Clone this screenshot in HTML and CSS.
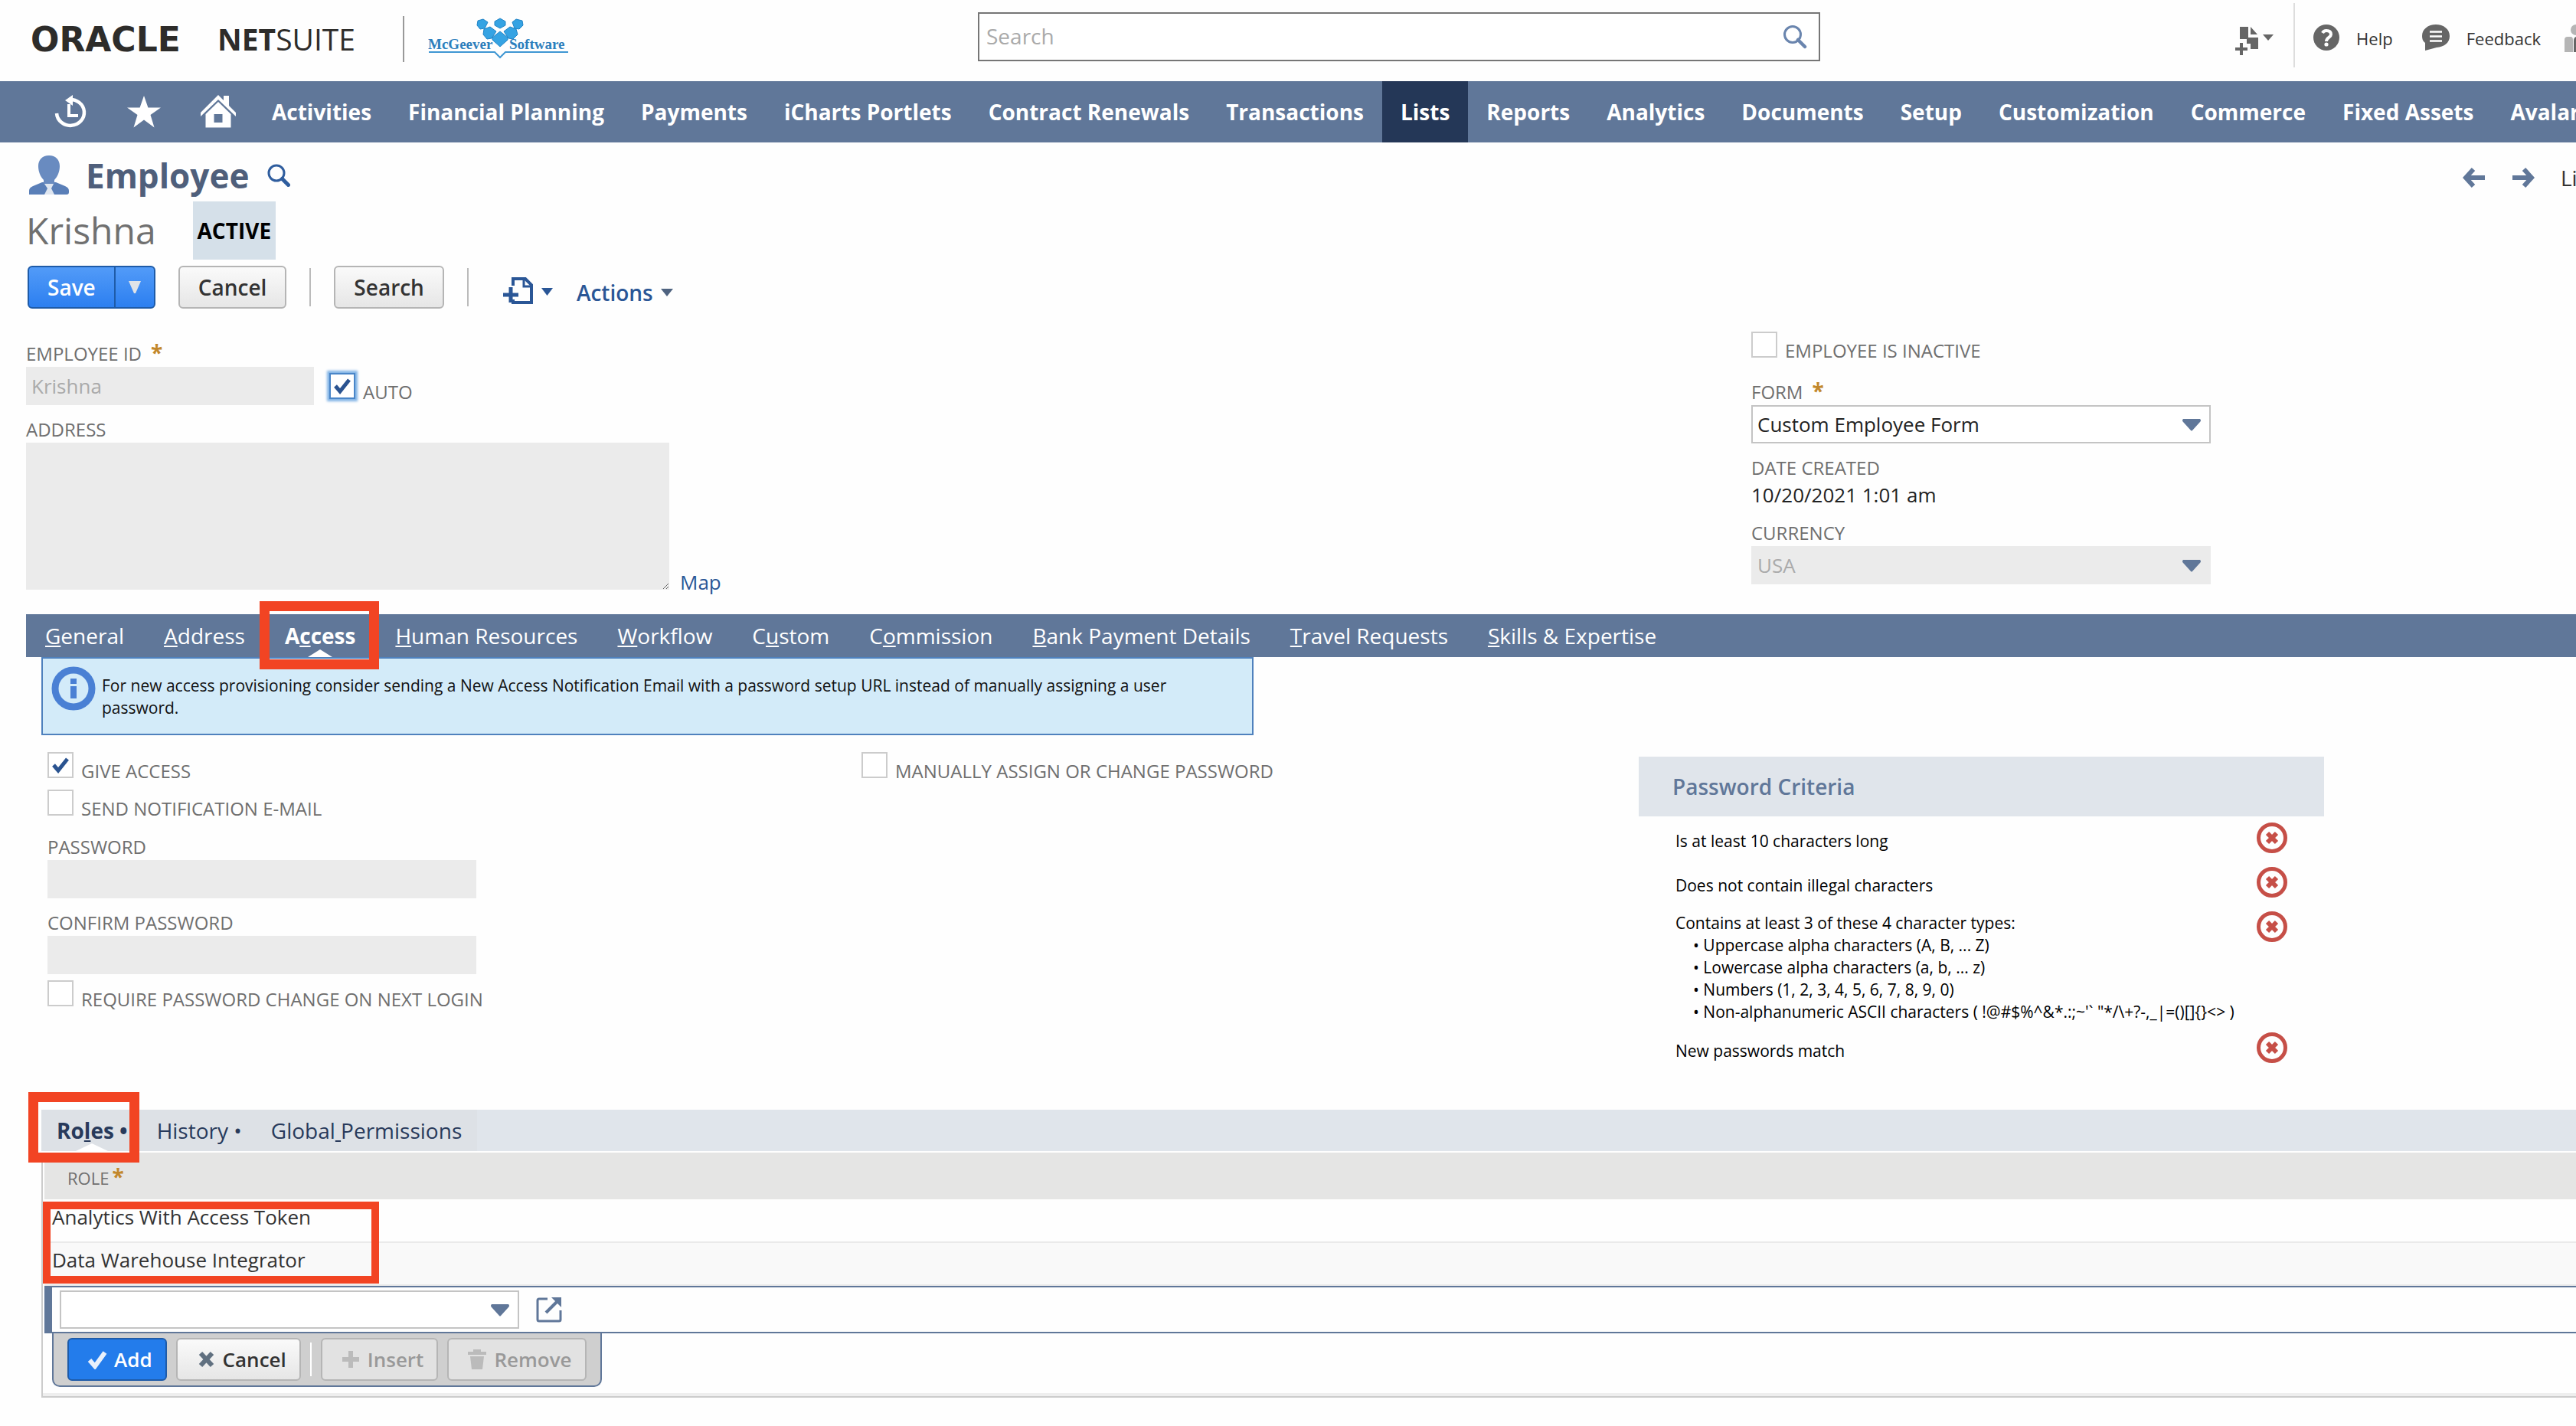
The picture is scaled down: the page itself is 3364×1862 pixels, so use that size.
FILE: index.html
```html
<!DOCTYPE html>
<html lang="en">
<head>
  <meta charset="UTF-8" />
  <meta name="viewport" content="width=device-width, initial-scale=1.0"/>
  <title>Employee - NetSuite</title>
  <link rel="stylesheet" href="styles.css">
</head>
<body>

  <!-- Header -->
  <header class="header">
    <div class="brand">
      <span class="oracle">ORACLE</span>
      <span class="netsuite"><b>NET</b>SUITE</span>
      <svg class="partner-logo" width="186" height="56" viewBox="0 0 186 56" role="img" aria-label="McGeever Software">
        <g fill="#35a3e3" stroke="#1f83c6" stroke-width="1">
          <path d="M65 4l7-2 6 4-4 8-6 1-4-5z"/>
          <path d="M87 5l7-4 7 4v5l-7 4-7-4z"/>
          <path d="M110 6l5-4 8 2 1 6-5 5-6-1z"/>
          <path d="M73 15l8-3 8 6-6 9-6 1-5-6z"/>
          <path d="M99 18l8-6 8 3 2 7-6 6-6-1z"/>
          <path d="M84 26l10-8 10 8v3L94 38l-10-9z"/>
        </g>
        <g fill="#2c7fbd" font-size="19">
          <text x="0" y="41">McGeever</text>
          <text x="106" y="41">Software</text>
        </g>
        <path d="M1 45h86l7 7 7-7h82" fill="none" stroke="#3f97d3" stroke-width="2"/>
      </svg>
    </div>

    <div class="global-search">
      <input type="search" placeholder="Search" aria-label="Global search" />
      <svg width="32" height="32" viewBox="0 0 32 32" fill="none" stroke="#6a85ae"><circle cx="13" cy="13" r="10.5" stroke-width="3"/><path d="M20 20l9 9" stroke-width="4.5" stroke-linecap="round"/></svg>
    </div>

    <div class="tools">
      <button class="icon-btn" aria-label="Create new">
        <svg width="50" height="38" viewBox="0 0 50 38" fill="#666"><path d="M6 1h11v14h5v0h8v15H20v-7h-5v-6H6zM20 1l9 10h-9z"/><path d="M6 22h4v6h6v4h-6v6H6v-6H0v-4h6z"/><path d="M36 11h14l-7 8z"/></svg>
      </button>
      <div class="tools-links">
        <a href="#"><svg width="34" height="34" viewBox="0 0 34 34"><circle cx="17" cy="17" r="17" fill="#666"/><path d="M12 11c1-2 3-3 5-3 4 0 6 2 6 5 0 4-6 4-6 9" fill="none" stroke="#fff" stroke-width="4"/><circle cx="17" cy="26" r="2.600" fill="#fff"/></svg>Help</a>
        <a href="#"><svg width="36" height="34" viewBox="0 0 36 34"><path d="M18 0c10 0 18 6 18 15S29 29 19 30L4 34V24C1 22 0 19 0 15 0 6 8 0 18 0z" fill="#666"/><path d="M10 9.500h16M10 15.500h16M10 21.500h16" stroke="#fff" stroke-width="2.500"/></svg>Feedback</a>
        <svg class="role-icon" width="15" height="36" viewBox="0 0 15 36"><path d="M0 36V20q0-4 4-4h4q3 0 3 4v16z" fill="#b5b5b5"/><circle cx="15" cy="7" r="7" fill="#b5b5b5"/><path d="M12 36V21q0-4 3-5v20z" fill="#666"/></svg>
      </div>
    </div>
  </header>

  <!-- Main nav -->
  <nav class="main-nav">
    <a href="#" class="nav-icon" aria-label="Recent"><svg width="44" height="44" viewBox="0 0 44 44" fill="none" stroke="#fff"><path d="M3 24a18 17 0 1 0 16-18" stroke-width="4.500"/><path d="M24 0l-10 7 10 7z" fill="#fff" stroke="none"/><path d="M19 12v15h12" stroke-width="4"/></svg></a>
    <a href="#" class="nav-icon" aria-label="Shortcuts"><svg width="44" height="44" viewBox="0 0 44 44" fill="#fff"><path d="M22 1l5.400 15.500H44L30.500 26l5 16.500L22 32.500 8.500 42.500l5-16.500L0 16.500h16.600z"/></svg></a>
    <a href="#" class="nav-icon nav-home" aria-label="Home"><svg width="48" height="44" viewBox="0 0 48 44"><path d="M24 0l7 7V1h7v13l9 9v5L24 6 1 28v-5z" fill="#fff"/><path fill-rule="evenodd" d="M24 9l16.500 16v17.500h-33V25zM18.500 25v11h11V25z" fill="#fff"/></svg></a>
    <a href="#">Activities</a>
    <a href="#">Financial Planning</a>
    <a href="#">Payments</a>
    <a href="#">iCharts Portlets</a>
    <a href="#">Contract Renewals</a>
    <a href="#">Transactions</a>
    <a href="#" class="active">Lists</a>
    <a href="#">Reports</a>
    <a href="#">Analytics</a>
    <a href="#">Documents</a>
    <a href="#">Setup</a>
    <a href="#">Customization</a>
    <a href="#">Commerce</a>
    <a href="#">Fixed Assets</a>
    <a href="#">Avalara</a>
  </nav>

  <main>
    <!-- Record title -->
    <div class="title-row">
      <svg width="54" height="54" viewBox="0 0 54 54"><path d="M1 52v-5q0-4 5-6l12-5h18l12 5q5 2 5 6v2q0 3-3 3z" fill="#5a7fb8"/><path d="M27 1c9 0 14 6 14 14 0 7-3 14-7 18v5q-7 3-14 0v-5c-4-4-7-11-7-18C13 7 18 1 27 1z" fill="#698bc0"/><path d="M21 38h12l-3 6 4 8H21l4-8z" fill="#dfe6f0"/></svg>
      <h1>Employee</h1>
      <a href="#" aria-label="Find"><svg width="30" height="30" viewBox="0 0 30 30" fill="none" stroke="#2f5d9e"><circle cx="12" cy="12" r="10" stroke-width="3"/><path d="M19.500 19.500l8 8" stroke-width="5" stroke-linecap="round"/></svg></a>
      <div class="pager">
        <a href="#" aria-label="Previous"><svg width="30" height="26" viewBox="0 0 30 26" fill="none" stroke="#607799" stroke-width="6"><path d="M14 2L4 13l10 11M5 13h24"/></svg></a>
        <a href="#" aria-label="Next"><svg width="30" height="26" viewBox="0 0 30 26" fill="none" stroke="#607799" stroke-width="6"><path d="M16 2l10 11-10 11M25 13H1"/></svg></a>
        <a href="#" class="pager-text">List</a>
      </div>
    </div>
    <div class="name-row">
      <span class="record-name">Krishna</span>
      <span class="status">ACTIVE</span>
    </div>

    <div class="toolbar">
      <div class="split-btn">
        <button class="btn btn-primary">Save</button>
        <button class="btn btn-primary" aria-label="More save options"><svg width="16" height="16" viewBox="0 0 16 16"><path d="M0 0h16L9 16H7z" fill="#dfe3e8"/></svg></button>
      </div>
      <button class="btn">Cancel</button>
      <span class="divider"></span>
      <button class="btn">Search</button>
      <span class="divider"></span>
      <a href="#" class="menu-link menu-new" aria-label="New"><svg width="66" height="38" viewBox="0 0 66 38" fill="none" stroke="#2a5696"><path d="M13 12V3h16l8 8v23H13v-4" stroke-width="4"/><path d="M27 3v10h10" stroke-width="3"/><path d="M0 24h20M10 14v20" stroke-width="5"/><path d="M50 15h15l-7.500 10z" fill="#2a5696" stroke="none"/></svg></a>
      <a href="#" class="menu-link">Actions<svg width="16" height="10" viewBox="0 0 16 10"><path d="M0 0h16L8 10z" fill="#4f6380"/></svg></a>
    </div>

    <!-- Main fields -->
    <form class="fields">
      <div class="fields-left">
        <label class="field-label" for="empId">EMPLOYEE ID<span class="required">*</span></label>
        <div class="field-line">
          <input type="text" id="empId" class="input emp-id" value="Krishna" disabled />
          <div class="check focused">
            <span class="box"><input type="checkbox" id="auto" checked /><svg viewBox="0 0 24 22"><path d="M3 11l6 7L21 3" /></svg></span>
            <label for="auto">AUTO</label>
          </div>
        </div>
        <label class="field-label spaced" for="address">ADDRESS</label>
        <div class="address-line">
          <textarea id="address" class="input" disabled></textarea>
          <a href="#" class="map-link">Map</a>
        </div>
      </div>

      <div class="fields-right">
        <div class="check">
          <span class="box"><input type="checkbox" id="inactive" /></span>
          <label for="inactive">EMPLOYEE IS INACTIVE</label>
        </div>
        <label class="field-label after-check" for="form">FORM<span class="required">*</span></label>
        <div class="select">
          <select id="form"><option>Custom Employee Form</option></select>
          <svg viewBox="0 0 24 16"><path d="M1 0h22q2 2 0 4L13 15q-1 1-2 0L1 4Q-1 2 1 0z"/></svg>
        </div>
        <div class="field-label spaced">DATE CREATED</div>
        <div class="value">10/20/2021 1:01 am</div>
        <label class="field-label spaced" for="currency">CURRENCY</label>
        <div class="select">
          <select id="currency" disabled><option>USA</option></select>
          <svg viewBox="0 0 24 16"><path d="M1 0h22q2 2 0 4L13 15q-1 1-2 0L1 4Q-1 2 1 0z"/></svg>
        </div>
      </div>
    </form>

    <!-- Tabs -->
    <nav class="tabs">
      <a href="#"><u>G</u>eneral</a>
      <a href="#"><u>A</u>ddress</a>
      <a href="#" class="current">A<u>c</u>cess</a>
      <a href="#"><u>H</u>uman Resources</a>
      <a href="#"><u>W</u>orkflow</a>
      <a href="#">C<u>u</u>stom</a>
      <a href="#">C<u>o</u>mmission</a>
      <a href="#"><u>B</u>ank Payment Details</a>
      <a href="#"><u>T</u>ravel Requests</a>
      <a href="#"><u>S</u>kills &amp; Expertise</a>
    </nav>

    <section class="tab-body">
      <div class="info-box">
        <svg width="58" height="58" viewBox="0 0 58 58"><circle cx="29" cy="29" r="24" fill="none" stroke="#4a80d4" stroke-width="9"/><path d="M25 16h8v7h-8zM25 26h8v16h-8z" fill="#4a80d4"/></svg>
        <p>For new access provisioning consider sending a New Access Notification Email with a password setup URL instead of manually assigning a user password.</p>
      </div>

      <div class="access">
        <div class="access-login">
          <div class="check">
            <span class="box"><input type="checkbox" id="giveAccess" checked /><svg viewBox="0 0 24 22"><path d="M3 11l6 7L21 3" /></svg></span>
            <label for="giveAccess">GIVE ACCESS</label>
          </div>
          <div class="check">
            <span class="box"><input type="checkbox" id="notify" /></span>
            <label for="notify">SEND NOTIFICATION E-MAIL</label>
          </div>
          <label class="field-label spaced" for="password">PASSWORD</label>
          <input type="password" id="password" class="input pwd" disabled />
          <label class="field-label spaced" for="password2">CONFIRM PASSWORD</label>
          <input type="password" id="password2" class="input pwd" disabled />
          <div class="check">
            <span class="box"><input type="checkbox" id="requireChange" /></span>
            <label for="requireChange">REQUIRE PASSWORD CHANGE ON NEXT LOGIN</label>
          </div>
        </div>

        <div class="access-manual">
          <div class="check">
            <span class="box"><input type="checkbox" id="manual" /></span>
            <label for="manual">MANUALLY ASSIGN OR CHANGE PASSWORD</label>
          </div>
        </div>

        <div class="criteria">
          <h2>Password Criteria</h2>
          <ul>
            <li>
              <div>Is at least 10 characters long</div>
              <svg viewBox="0 0 40 40"><circle cx="20" cy="20" r="17.500"/><path d="M14 14l12 12M26 14L14 26"/></svg>
            </li>
            <li>
              <div>Does not contain illegal characters</div>
              <svg viewBox="0 0 40 40"><circle cx="20" cy="20" r="17.500"/><path d="M14 14l12 12M26 14L14 26"/></svg>
            </li>
            <li>
              <div class="types">Contains at least 3 of these 4 character types:
                <p>• Uppercase alpha characters (A, B, ... Z)</p>
                <p>• Lowercase alpha characters (a, b, ... z)</p>
                <p>• Numbers (1, 2, 3, 4, 5, 6, 7, 8, 9, 0)</p>
                <p>• Non-alphanumeric ASCII characters ( !@#$%^&amp;*.:;~'` "*/\+?-,_|=()[]{}&lt;&gt; )</p>
              </div>
              <svg viewBox="0 0 40 40"><circle cx="20" cy="20" r="17.500"/><path d="M14 14l12 12M26 14L14 26"/></svg>
            </li>
            <li>
              <div>New passwords match</div>
              <svg viewBox="0 0 40 40"><circle cx="20" cy="20" r="17.500"/><path d="M14 14l12 12M26 14L14 26"/></svg>
            </li>
          </ul>
        </div>
      </div>

      <!-- Roles sublist -->
      <nav class="subtabs">
        <div class="subtabs-list">
          <a href="#" class="current">Ro<u>l</u>es •</a>
          <a href="#">History •</a>
          <a href="#">Global<u> </u>Permissions</a>
        </div>
      </nav>
      <div class="sublist">
        <div class="roles">
          <table>
            <thead>
              <tr><th>ROLE<span class="required">*</span></th></tr>
            </thead>
            <tbody>
              <tr><td>Analytics With Access Token</td></tr>
              <tr><td>Data Warehouse Integrator</td></tr>
            </tbody>
          </table>
          <div class="highlight"></div>
        </div>
        <div class="edit-row">
          <div class="select">
            <select aria-label="Role"><option></option></select>
            <svg viewBox="0 0 24 16"><path d="M1 0h22q2 2 0 4L13 15q-1 1-2 0L1 4Q-1 2 1 0z"/></svg>
          </div>
          <a href="#" aria-label="Open"><svg width="34" height="34" viewBox="0 0 34 34" fill="none" stroke="#607799" stroke-width="3"><path d="M15 3H4q-2 0-2 2v25q0 2 2 2h26q2 0 2-2V18"/><path d="M13 21L28 6" stroke-width="4"/><path d="M20 1h13v13z" fill="#607799" stroke="none"/></svg></a>
        </div>
        <div class="row-actions">
          <button class="btn btn-add"><svg viewBox="0 0 26 26"><path d="M3 14l7 8L23 4" fill="none" stroke="#e8f0fb" stroke-width="6"/></svg>Add</button>
          <button class="btn"><svg viewBox="0 0 26 26"><path d="M6 5l15 16M21 5L6 21" fill="none" stroke="#607080" stroke-width="6"/></svg>Cancel</button>
          <span class="divider"></span>
          <button class="btn" disabled><svg viewBox="0 0 26 26"><path d="M13 2v22M2 13h22" fill="none" stroke="#bbb" stroke-width="6"/></svg>Insert</button>
          <button class="btn" disabled><svg viewBox="0 0 26 26"><path d="M1 3h7V0h10v3h7v4H1zM4 9h18l-2 17H6z" fill="#bbb"/></svg>Remove</button>
        </div>
      </div>
    </section>
  </main>

</body>
</html>
```
FILE: styles.css
```css
* {
  margin: 0;
  padding: 0;
  box-sizing: border-box;
  font-family: "Open Sans", sans-serif;
}

body {
  background-color: #fefefe;
  color: #222;
  font-size: 26px;
  overflow-x: hidden;
}

a {
  color: inherit;
  text-decoration: none;
}

svg {
  display: block;
  flex-shrink: 0;
}

/* header */
.header {
  display: grid;
  grid-template-columns: 1277fr 1100fr 987fr;
  height: 106px;
}

.brand {
  display: flex;
  align-items: center;
  padding: 0 0 4px 40px;
  color: #2d2c2a;
}

.oracle {
  width: 244px;
  font-family: "DejaVu Sans", sans-serif;
  font-size: 44px;
  font-weight: bold;
}

.netsuite {
  font-size: 39px;
  padding-right: 62px;
  line-height: 60px;
  border-right: 2px solid #999;
}

.partner-logo {
  margin-left: 31px;
}

.partner-logo text {
  font-family: "Liberation Serif", serif;
  font-weight: bold;
}

.global-search {
  position: relative;
  padding-top: 16px;
}

.global-search input {
  width: 100%;
  height: 64px;
  padding: 0 60px 2px 9px;
  border: 2px solid #767676;
  background-color: #fff;
  font-size: 28px;
  appearance: none;
}

.global-search input::placeholder {
  color: #aaa;
}

.global-search svg {
  position: absolute;
  right: 17px;
  top: 32px;
}

.tools {
  display: flex;
  justify-content: flex-end;
  padding-top: 4px;
}

.icon-btn {
  height: 92px;
  padding: 6px 26px 0 0;
  border: none;
  background: none;
}

.tools-links {
  display: flex;
  height: 84px;
  padding-left: 24px;
  border-left: 2px solid #ddd;
  color: #333;
  font-size: 22px;
}

.tools-links a {
  display: flex;
  align-items: center;
  gap: 22px;
  margin-right: 38px;
  padding-top: 8px;
}

.tools-links a svg {
  margin-bottom: 2px;
}

.tools-links a:nth-child(2) {
  margin-right: 31px;
}

.role-icon {
  margin-top: 28px;
}

/* main nav */
.main-nav {
  display: flex;
  height: 80px;
  padding-left: 71px;
  background-color: #607799;
  color: #fff;
  font-size: 28px;
  font-weight: bold;
  line-height: 80px;
  white-space: nowrap;
  overflow: hidden;
}

.main-nav a {
  padding: 0 24px;
}

.main-nav .nav-icon {
  padding: 18px 51px 0 0;
}

.main-nav .nav-home {
  padding-right: 22px;
}

.main-nav .active {
  background-color: #243757;
}

/* record title */
.title-row {
  display: flex;
  align-items: center;
  padding: 17px 0 0 37px;
  height: 69px;
}

h1 {
  margin: 0 24px 0 21px;
  font-size: 44px;
  line-height: 52px;
  color: #4f5f7b;
}

.pager {
  display: flex;
  align-items: center;
  gap: 34px;
  width: 148px;
  margin-left: auto;
  padding-top: 6px;
  overflow: hidden;
}

.pager-text {
  font-size: 28px;
  color: #333;
}

.name-row {
  display: flex;
  margin: 8px 0;
  padding-left: 34px;
  line-height: 76px;
}

.record-name {
  margin-right: 48px;
  font-size: 48px;
  color: #707070;
}

.status {
  padding: 0 6px;
  background-color: #d5e0e9;
  color: #000;
  font-size: 28px;
  font-weight: bold;
}

.toolbar {
  display: flex;
  align-items: center;
  gap: 30px;
  padding-left: 36px;
}

.btn {
  height: 56px;
  padding: 0 24px;
  border: 2px solid #b5b5b5;
  border-radius: 6px;
  background: linear-gradient(#fafafa, #e6e6e6);
  color: #333;
  font-size: 28px;
  font-weight: 600;
}

.split-btn {
  display: flex;
}

.btn-primary {
  background: linear-gradient(#529bf8, #2c7ff0);
  border-color: #1e5ba8;
  color: #fff;
}

.split-btn .btn:first-child {
  border-radius: 6px 0 0 6px;
}

.split-btn .btn:last-child {
  margin-left: -2px;
  padding: 0 17px;
  border-radius: 0 6px 6px 0;
}

.divider {
  width: 2px;
  height: 50px;
  background-color: #bbb;
}

.menu-link {
  display: flex;
  align-items: center;
  gap: 10px;
  margin-top: 14px;
  color: #2a5696;
  font-size: 28px;
  font-weight: 600;
}

.menu-new {
  margin: 10px 0 0 15px;
}

/* main fields */
.fields {
  display: grid;
  grid-template-columns: 2253fr 1077fr;
  padding: 30px 0 32px 34px;
}

.fields-left {
  padding-top: 13px;
}

.field-label {
  display: block;
  margin-bottom: 1px;
  font-size: 24px;
  line-height: 32px;
  color: #6f6f6f;
}

.field-label.spaced {
  margin-top: 16px;
}

.check + .field-label.spaced {
  margin-top: 18px;
}

.field-label.after-check {
  margin-top: 22px;
}

.required {
  margin-left: 12px;
  color: #c2872b;
  font-size: 28px;
  font-weight: bold;
  line-height: 0;
}

.input {
  display: block;
  height: 50px;
  padding: 0 7px;
  border: none;
  background-color: #ebebeb;
  color: #aaa;
  font-size: 26px;
}

.emp-id {
  width: 376px;
}

.pwd {
  width: 560px;
}

textarea.input {
  width: 840px;
  height: 192px;
}

.field-line {
  display: flex;
  gap: 20px;
  height: 50px;
}

.address-line {
  display: flex;
  align-items: flex-end;
  gap: 14px;
}

.map-link {
  margin-bottom: -8px;
  line-height: 36px;
  color: #2a5696;
}

.check {
  display: flex;
  gap: 10px;
  margin-top: 8px;
  font-size: 24px;
  line-height: 32px;
  color: #6f6f6f;
}

.check:first-child {
  margin-top: 0;
}

.check label {
  padding-top: 9px;
}

.box {
  position: relative;
  width: 34px;
  height: 34px;
}

.box input {
  display: block;
  width: 34px;
  height: 34px;
  border: 2px solid #ccc;
  background-color: #fff;
  appearance: none;
}

.box svg {
  position: absolute;
  left: 5px;
  top: 6px;
  width: 24px;
  height: 22px;
  fill: none;
  stroke: #2a5390;
  stroke-width: 5;
  pointer-events: none;
}

.focused .box input {
  border-color: #4a86c8;
  box-shadow: 0 0 3px 3px #82b4e6;
}

.value {
  line-height: 36px;
}

.select {
  position: relative;
  width: 600px;
}

.select select {
  display: block;
  width: 100%;
  height: 50px;
  padding: 0 50px 0 6px;
  border: 2px solid #c4c4c4;
  border-radius: 0;
  background-color: #fff;
  color: #222;
  font-size: 26px;
  appearance: none;
}

.select select:disabled {
  border-color: #ebebeb;
  background-color: #ebebeb;
  color: #aaa;
  opacity: 1;
}

.select svg {
  position: absolute;
  right: 13px;
  top: 18px;
  width: 24px;
  height: 16px;
  fill: #607799;
  pointer-events: none;
}

/* tabs */
.tabs {
  display: flex;
  gap: 52px;
  margin-left: 34px;
  padding: 0 25px;
  background-color: #607799;
  color: #fff;
  font-size: 28px;
  line-height: 56px;
}

.current {
  position: relative;
  font-weight: bold;
}

.current::before {
  content: "";
  position: absolute;
  left: 50%;
  bottom: 0;
  margin-left: -16px;
  border: 16px solid transparent;
  border-top: none;
  border-bottom: 10px solid #fff;
}

/* red callout frames */
.current::after {
  content: "";
  position: absolute;
  z-index: 2;
  top: -17px;
  right: -31px;
  bottom: -16px;
  left: -33px;
  border: 13px solid #f24423;
}

.tab-body {
  padding-left: 54px;
}

.info-box {
  display: flex;
  gap: 8px;
  width: 1583px;
  height: 102px;
  padding: 10px 60px 0 11px;
  border: 2px solid #4f81bd;
  background-color: #d3ebf9;
}

.info-box p {
  padding-top: 11px;
  font-size: 21px;
  line-height: 29px;
  color: #111;
}

.access {
  display: grid;
  grid-template-columns: 1063fr 1015fr 1224fr;
  padding: 22px 0 51px 8px;
}

.criteria {
  width: 895px;
  padding-top: 6px;
  font-size: 21px;
  line-height: 29px;
  color: #000;
}

.criteria h2 {
  padding-left: 44px;
  background-color: #e0e5eb;
  color: #607799;
  font-size: 28px;
  font-weight: 600;
  line-height: 78px;
}

.criteria ul {
  list-style: none;
}

.criteria li {
  display: flex;
  justify-content: space-between;
  padding: 8px 48px 4px 48px;
  white-space: nowrap;
}

.criteria li div {
  padding-top: 10px;
}

.criteria li .types {
  padding-top: 1px;
}

.types p {
  padding-left: 23px;
}

.criteria svg {
  width: 40px;
  height: 40px;
  margin-bottom: 6px;
  fill: none;
  stroke: #c64f47;
  stroke-width: 5;
}

.criteria svg path {
  stroke-width: 6;
}

/* roles sublist */
.subtabs {
  display: flex;
  background-color: #e0e5eb;
  color: #283a5b;
  font-size: 28px;
  line-height: 54px;
}

.subtabs-list {
  display: flex;
  gap: 38px;
  padding: 0 20px;
  background-color: #dde1e6;
}

.subtabs .current::before {
  margin-left: -21px;
  border-left-width: 21px;
  border-right-width: 21px;
}

.subtabs .current::after {
  top: -23px;
  right: -15px;
  bottom: -15px;
  left: -37px;
}

.sublist {
  margin-top: 2px;
  padding: 0 0 12px 2px;
  border-left: 2px solid #ccc;
  border-bottom: 2px solid #ccc;
  box-shadow: inset 0 -4px #eee;
}

.roles {
  position: relative;
}

.roles table {
  width: 100%;
  border-collapse: collapse;
}

.roles th {
  height: 61px;
  padding: 5px 0 0 30px;
  background-color: #e5e5e4;
  color: #6f6f6f;
  font-size: 22px;
  font-weight: normal;
  text-align: left;
}

.roles th .required {
  margin-left: 4px;
}

.roles td {
  height: 56px;
  padding: 4px 0 14px 10px;
  border-bottom: 2px solid #eaeaea;
  color: #333;
  line-height: 36px;
}

.roles tr:nth-child(2) td {
  background-color: #f9f9f9;
}

.highlight {
  position: absolute;
  left: -2px;
  bottom: 3px;
  width: 439px;
  height: 107px;
  border: 10px solid #f24423;
}

.edit-row {
  display: flex;
  align-items: center;
  gap: 22px;
  padding: 4px 10px;
  border: 2px solid #607799;
  border-width: 2px 0 2px 10px;
}

.row-actions {
  display: flex;
  align-items: center;
  gap: 12px;
  width: fit-content;
  margin-left: 10px;
  padding: 6px 18px;
  border: 2px solid #607799;
  border-top: none;
  border-radius: 0 0 10px 10px;
  background-color: #cfcfcf;
}

.row-actions .btn {
  display: flex;
  align-items: center;
  gap: 9px;
  padding: 0 17px 0 24px;
  font-size: 26px;
}

.row-actions .btn svg {
  width: 26px;
  height: 26px;
}

.row-actions .btn-add {
  background: #237ceb;
  border-color: #1e5ba8;
  color: #fff;
}

.row-actions .btn:disabled {
  background: #e2e2e2;
  color: #999;
}

.row-actions .divider {
  height: 44px;
  background-color: #fff;
}
```
